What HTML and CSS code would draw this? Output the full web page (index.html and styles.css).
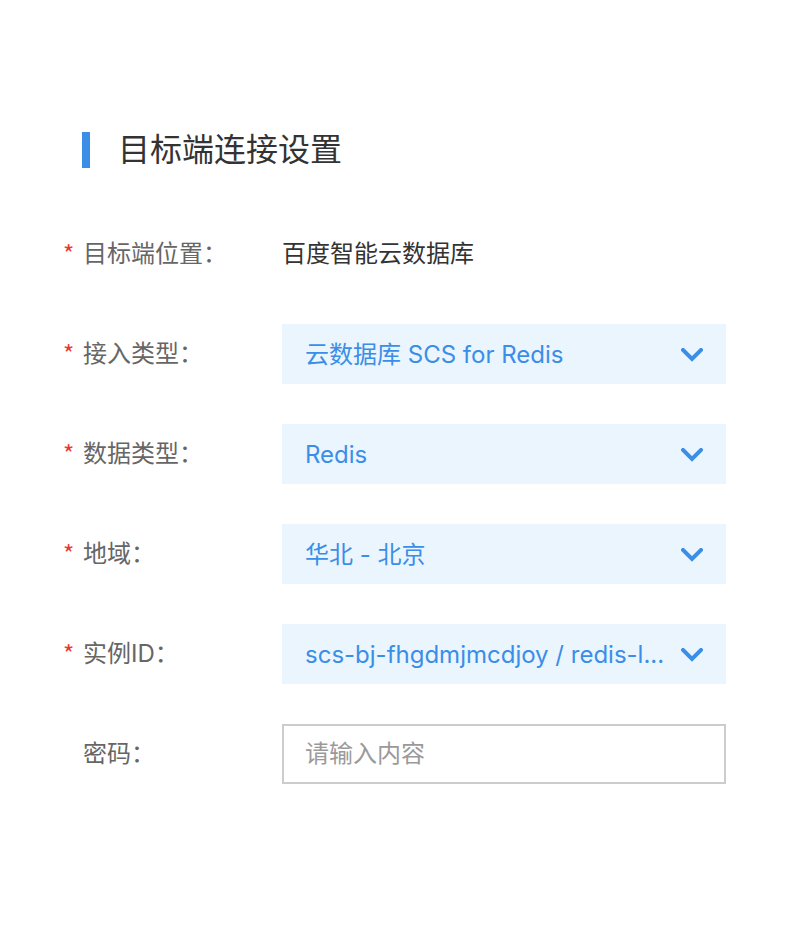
FILE: index.html
```html
<!DOCTYPE html>
<html lang="zh-CN">
<head>
<meta charset="utf-8">
<link rel="stylesheet" href="styles.css">
</head>
<body>
<div class="page">
  <div class="title">
    <span class="title-bar"></span>
    <h1 class="title-text">目标端连接设置</h1>
  </div>
  <div class="form">
    <div class="row">
      <div class="label"><span class="req">*</span>目标端位置：</div>
      <div class="value">百度智能云数据库</div>
    </div>
    <div class="row">
      <div class="label"><span class="req">*</span>接入类型：</div>
      <div class="select"><span class="select-text">云数据库 SCS for Redis</span>
        <svg class="chev" width="22" height="14" viewBox="0 0 22 14"><path d="M2 2 L11 11 L20 2" fill="none" stroke="#3b8ee8" stroke-width="4" stroke-linecap="square"/></svg></div>
    </div>
    <div class="row">
      <div class="label"><span class="req">*</span>数据类型：</div>
      <div class="select"><span class="select-text">Redis</span>
        <svg class="chev" width="22" height="14" viewBox="0 0 22 14"><path d="M2 2 L11 11 L20 2" fill="none" stroke="#3b8ee8" stroke-width="4" stroke-linecap="square"/></svg></div>
    </div>
    <div class="row">
      <div class="label"><span class="req">*</span>地域：</div>
      <div class="select"><span class="select-text">华北 - 北京</span>
        <svg class="chev" width="22" height="14" viewBox="0 0 22 14"><path d="M2 2 L11 11 L20 2" fill="none" stroke="#3b8ee8" stroke-width="4" stroke-linecap="square"/></svg></div>
    </div>
    <div class="row">
      <div class="label"><span class="req">*</span>实例ID：</div>
      <div class="select"><span class="select-text">scs-bj-fhgdmjmcdjoy / redis-l...</span>
        <svg class="chev" width="22" height="14" viewBox="0 0 22 14"><path d="M2 2 L11 11 L20 2" fill="none" stroke="#3b8ee8" stroke-width="4" stroke-linecap="square"/></svg></div>
    </div>
    <div class="row">
      <div class="label"><span class="req req-empty"></span>密码：</div>
      <input class="input" type="text" placeholder="请输入内容">
    </div>
  </div>
</div>
</body>
</html>
```

FILE: styles.css
```css
html, body {
  margin: 0;
  padding: 0;
  background: #fff;
}
body {
  font-family: "Inter", "Noto Sans CJK SC", sans-serif;
  width: 810px;
  height: 926px;
  overflow: hidden;
}
.page {
  padding-top: 132px;
}
.title {
  display: flex;
  align-items: center;
  height: 36px;
  padding-left: 82px;
}
.title-bar {
  width: 8px;
  height: 36px;
  background: #3a8ee6;
}
.title-text {
  margin: -1px 0 0 28px;
  font-size: 32px;
  font-weight: 400;
  color: #333;
  line-height: 36px;
}
.form {
  margin-top: 56px;
  padding-left: 63px;
  display: flex;
  flex-direction: column;
  gap: 40px;
}
.row {
  display: grid;
  grid-template-columns: 219px 444px;
  height: 60px;
  align-items: center;
}
.label {
  display: flex;
  align-items: center;
  font-size: 24px;
  color: #666;
  line-height: 30px;
  margin-top: -1px;
}
.req {
  width: 20px;
  font-family: "Noto Sans CJK SC", sans-serif;
  color: #e8382f;
  font-size: 24px;
  line-height: 30px;
  margin-top: -1px;
}
.value {
  font-size: 24px;
  line-height: 30px;
  color: #333;
  margin-top: -1px;
}
.select {
  height: 60px;
  background: #eaf5fd;
  display: flex;
  align-items: center;
  justify-content: space-between;
  padding: 0 23px;
  box-sizing: border-box;
}
.select-text {
  font-size: 24px;
  line-height: 30px;
  color: #3b8ee8;
  white-space: nowrap;
  margin-top: 1px;
}
.chev {
  display: block;
  margin-top: 2px;
}
.input {
  height: 60px;
  box-sizing: border-box;
  border: 2px solid #cccccc;
  background: #fff;
  padding: 0 21px 1px;
  font-family: inherit;
  font-size: 24px;
  color: #333;
  outline: none;
  width: 444px;
}
.input::placeholder {
  color: #9a9a9a;
}
```
